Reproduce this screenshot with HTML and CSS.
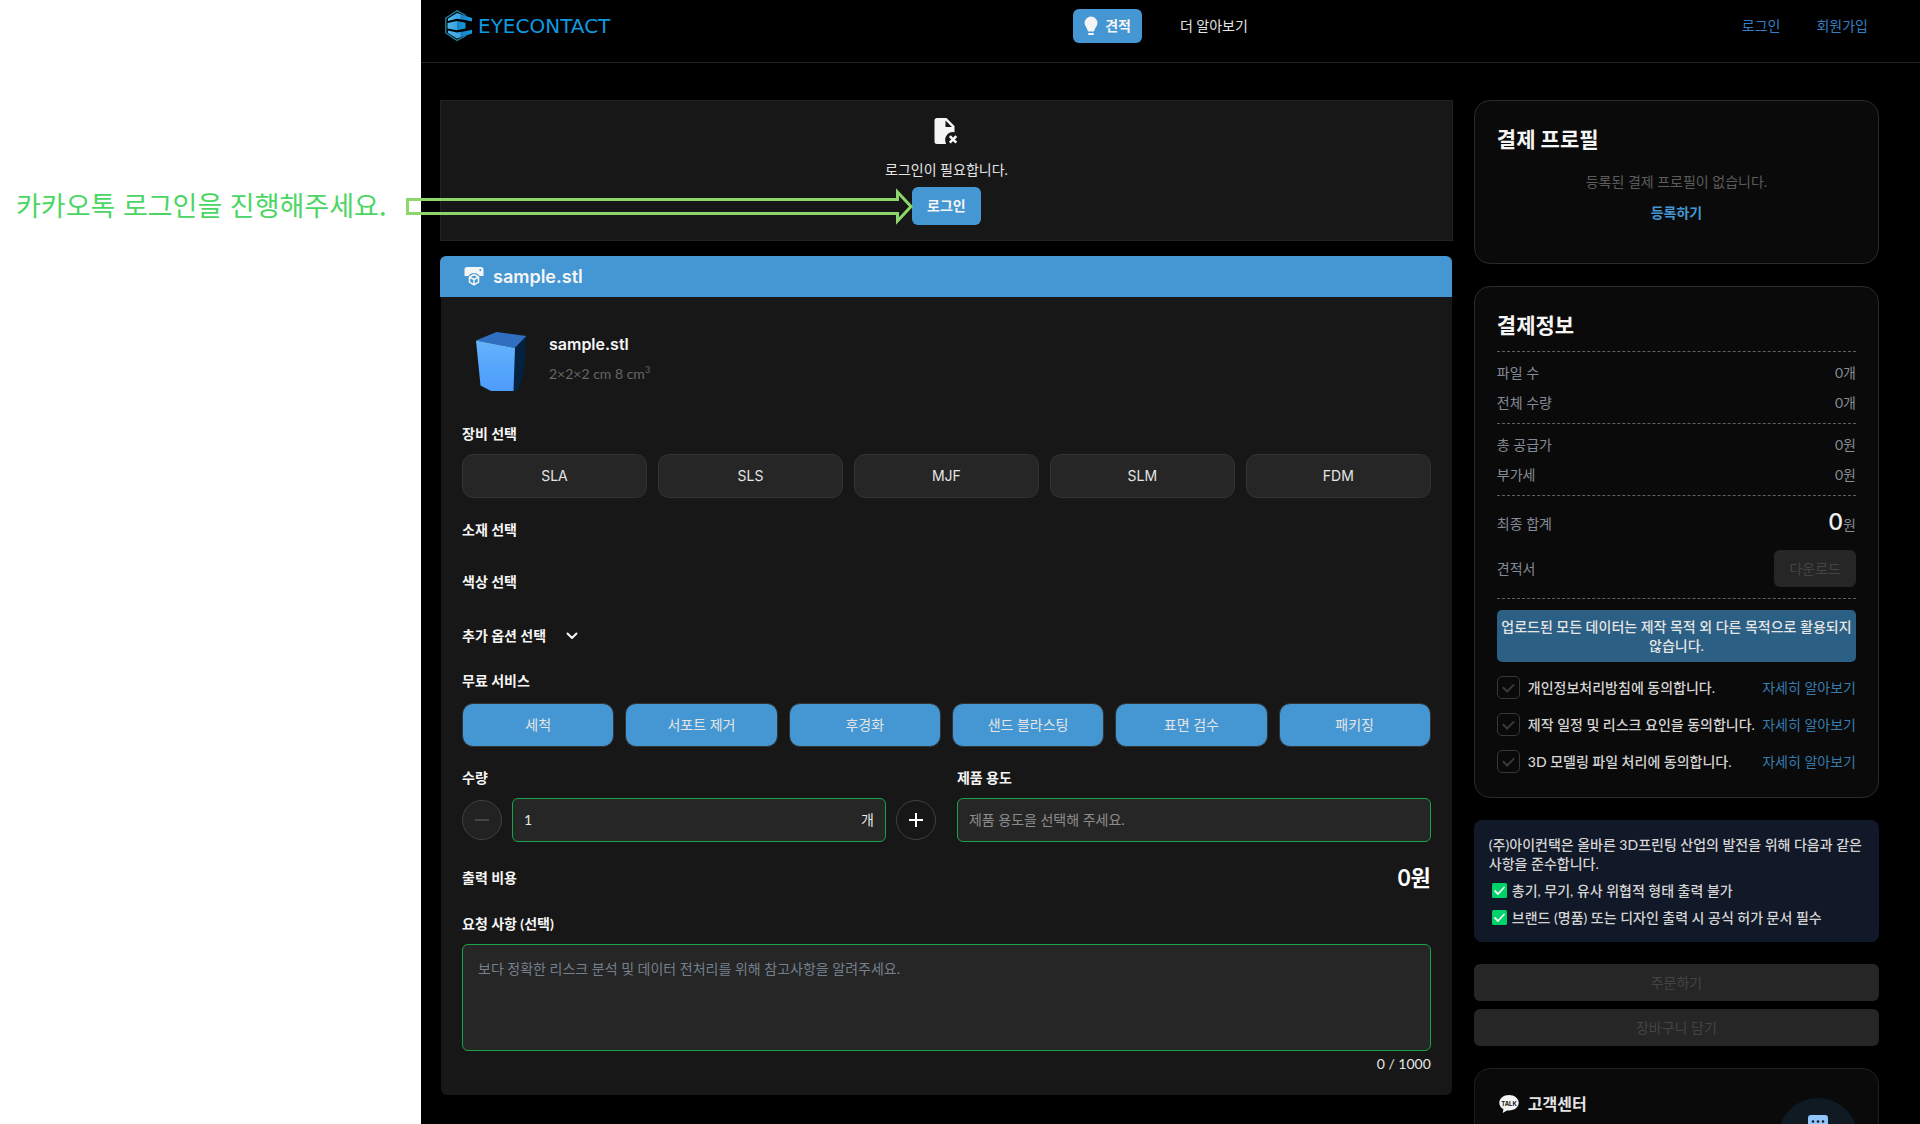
FILE: index.html
```html
<!DOCTYPE html>
<html lang="ko">
<head>
<meta charset="utf-8">
<meta name="viewport" content="width=device-width, initial-scale=1">
<title>EYECONTACT 견적</title>
<link rel="stylesheet" href="styles.css">
</head>
<body>
<div class="page">
  <aside class="guide">
    <p class="guide-text">카카오톡 로그인을 진행해주세요.</p>
    <svg class="guide-arrow" width="510" height="40" viewBox="0 0 510 40" aria-hidden="true">
      <path d="M2.500 12.500H492.500V5L506 19.500L492.500 34V26.500H2.500Z" fill="none" stroke="#8cd66b" stroke-width="3"/>
    </svg>
  </aside>

  <div class="app">
    <header class="header">
      <a class="logo" href="#">
        <svg width="28" height="32" viewBox="0 0 28 32" aria-hidden="true">
          <defs>
            <linearGradient id="mark" x1="0" x2="1">
              <stop offset="0" stop-color="#4fb4ea"/>
              <stop offset=".5" stop-color="#3aa5e2"/>
              <stop offset=".55" stop-color="#1d7fc0"/>
              <stop offset="1" stop-color="#109be0"/>
            </linearGradient>
          </defs>
          <path d="M21 5.500L12 .8L.8 8V23L12 30.500L21 25.500" fill="none" stroke="#1f86a8" stroke-width="1.300"/>
          <path d="M3 8.500L12 3L27 8V11.500L20 10L12 8.800L3 11Z" fill="url(#mark)"/>
          <path d="M2.500 13L12 11L20.500 12.800V18.500L12 20.200L2.500 18.500Z" fill="url(#mark)"/>
          <path d="M3 20.500L12 22.400L20 21.200L27 19.800V23.500L12 28.500L3 23Z" fill="url(#mark)"/>
        </svg>
        <span>EYECONTACT</span>
      </a>
      <nav class="nav">
        <a class="nav-active" href="#">
          <svg width="14" height="20" viewBox="0 0 14 20" fill="#f5f5f5" aria-hidden="true">
            <path d="M7 .5A6.400 6.400 0 0 0 .6 7C.6 10 2.700 11.300 3.300 13.600Q3.600 15.500 4.600 15.500H9.400Q10.400 15.500 10.700 13.600C11.300 11.300 13.400 10 13.400 7A6.400 6.400 0 0 0 7 .5Z"/>
            <rect x="4" y="17" width="6" height="2" rx="1"/>
          </svg>
          <span>견적</span>
        </a>
        <a class="nav-link" href="#">더 알아보기</a>
      </nav>
      <div class="account">
        <a href="#">로그인</a>
        <a href="#">회원가입</a>
      </div>
    </header>

    <main class="content">
      <div class="main-column">
        <section class="login-panel">
          <svg width="24" height="26" viewBox="0 0 24 26" aria-hidden="true">
            <path d="M3 0H12.500L20.500 8V14.200A8 8 0 0 0 12 25.700V26H3A2.500 2.500 0 0 1 .5 23.500V2.500A2.500 2.500 0 0 1 3 0ZM11.500 2.500V9H18Z" fill="#f5f5f5" fill-rule="evenodd"/>
            <path d="M15.800 18.200L22.300 24.700M22.300 18.200L15.800 24.700" stroke="#f5f5f5" stroke-width="2.600"/>
          </svg>
          <p>로그인이 필요합니다.</p>
          <button class="primary-button" type="button">로그인</button>
        </section>

        <section class="file">
          <h2 class="file-tab">
            <svg width="20" height="19" viewBox="0 0 20 19" aria-hidden="true">
              <path d="M3 0H17A2.500 2.500 0 0 1 19.500 2.500V9H15.500A6.500 6.500 0 0 0 4.500 9H.5V2.500A2.500 2.500 0 0 1 3 0Z" fill="#f5f5f5"/>
              <circle cx="16.300" cy="3" r="1" fill="#4497d3"/>
              <path d="M10 7.500L14.500 10V15.200L10 17.800L5.500 15.200V10ZM5.500 10L10 12.500L14.500 10M10 12.500V17.800" fill="#4497d3" stroke="#f5f5f5" stroke-width="1.500" stroke-linejoin="round"/>
            </svg>
            <span>sample.stl</span>
          </h2>
          <form class="file-body">
            <div class="preview">
              <svg width="51" height="59" viewBox="0 0 51 59" aria-hidden="true">
                <defs>
                  <linearGradient id="front" x1="0" y1="0" x2="0" y2="1">
                    <stop offset="0" stop-color="#67b4fc"/>
                    <stop offset=".5" stop-color="#55a6fc"/>
                    <stop offset="1" stop-color="#4e9dfb"/>
                  </linearGradient>
                </defs>
                <path d="M0 8.500L20.500 0L50.500 4L39 16Z" fill="#306fc0"/>
                <path d="M39 16L50.500 4L48 39Q46 50 41 59H37Z" fill="#04213f"/>
                <path d="M0 8.500L39 16L37.500 59H15L4.500 53.500Z" fill="url(#front)"/>
              </svg>
              <div class="preview-info">
                <h3>sample.stl</h3>
                <p>2×2×2 cm 8 cm<sup>3</sup></p>
              </div>
            </div>

            <section class="equipment">
              <h4>장비 선택</h4>
              <div class="options five">
                <button type="button">SLA</button>
                <button type="button">SLS</button>
                <button type="button">MJF</button>
                <button type="button">SLM</button>
                <button type="button">FDM</button>
              </div>
            </section>

            <h4 class="material">소재 선택</h4>
            <h4 class="color">색상 선택</h4>
            <button class="disclosure" type="button">추가 옵션 선택
              <svg width="12" height="8" viewBox="0 0 12 8" fill="none" stroke="#f5f5f5" stroke-width="2" stroke-linecap="round" stroke-linejoin="round" aria-hidden="true"><path d="M1.500 1.500L6 6L10.500 1.500"/></svg>
            </button>

            <section class="services">
              <h4>무료 서비스</h4>
              <div class="options six">
                <button type="button">세척</button>
                <button type="button">서포트 제거</button>
                <button type="button">후경화</button>
                <button type="button">샌드 블라스팅</button>
                <button type="button">표면 검수</button>
                <button type="button">패키징</button>
              </div>
            </section>

            <div class="fields">
              <div class="field">
                <label for="quantity">수량</label>
                <div class="stepper">
                  <button class="round" type="button" aria-label="감소" disabled>
                    <svg width="14" height="14" viewBox="0 0 14 14" stroke="#525252" stroke-width="1.500" aria-hidden="true"><path d="M0 7H14"/></svg>
                  </button>
                  <div class="quantity">
                    <input id="quantity" type="text" value="1">
                    <span>개</span>
                  </div>
                  <button class="round" type="button" aria-label="증가">
                    <svg width="14" height="14" viewBox="0 0 14 14" stroke="#fff" stroke-width="2" aria-hidden="true"><path d="M0 7H14M7 0V14"/></svg>
                  </button>
                </div>
              </div>
              <div class="field">
                <label for="usage">제품 용도</label>
                <select id="usage"><option>제품 용도을 선택해 주세요.</option></select>
              </div>
            </div>

            <div class="cost">
              <h4>출력 비용</h4>
              <strong>0원</strong>
            </div>

            <div class="request">
              <label for="request">요청 사항 (선택)</label>
              <textarea id="request" placeholder="보다 정확한 리스크 분석 및 데이터 전처리를 위해 참고사항을 알려주세요."></textarea>
              <span class="counter">0 / 1000</span>
            </div>
          </form>
        </section>
      </div>

      <aside class="sidebar">
        <section class="card profile">
          <h2>결제 프로필</h2>
          <p>등록된 결제 프로필이 없습니다.</p>
          <a href="#">등록하기</a>
        </section>

        <section class="card payment">
          <h2>결제정보</h2>
          <dl class="rows">
            <div><dt>파일 수</dt><dd>0개</dd></div>
            <div><dt>전체 수량</dt><dd>0개</dd></div>
          </dl>
          <dl class="rows">
            <div><dt>총 공급가</dt><dd>0원</dd></div>
            <div><dt>부가세</dt><dd>0원</dd></div>
          </dl>
          <dl class="rows total">
            <div><dt>최종 합계</dt><dd><b>0</b>원</dd></div>
            <div><dt>견적서</dt><dd><button class="muted-button" type="button" disabled>다운로드</button></dd></div>
          </dl>
          <div class="agreements">
            <p class="data-notice">업로드된 모든 데이터는 제작 목적 외 다른 목적으로 활용되지 않습니다.</p>
            <div class="agreement">
              <input id="agree-privacy" type="checkbox">
              <label for="agree-privacy">개인정보처리방침에 동의합니다.</label>
              <a href="#">자세히 알아보기</a>
            </div>
            <div class="agreement">
              <input id="agree-schedule" type="checkbox">
              <label for="agree-schedule">제작 일정 및 리스크 요인을 동의합니다.</label>
              <a href="#">자세히 알아보기</a>
            </div>
            <div class="agreement">
              <input id="agree-model" type="checkbox">
              <label for="agree-model">3D 모델링 파일 처리에 동의합니다.</label>
              <a href="#">자세히 알아보기</a>
            </div>
          </div>
        </section>

        <section class="policy">
          <p>(주)아이컨택은 올바른 3D프린팅 산업의 발전을 위해 다음과 같은 사항을 준수합니다.</p>
          <ul>
            <li><svg width="15" height="15" viewBox="0 0 15 15" aria-hidden="true"><rect width="15" height="15" rx="1.500" fill="#00d26a"/><path d="M3 8L6 11L12 4.500" fill="none" stroke="#f4f4f4" stroke-width="1.800" stroke-linecap="round" stroke-linejoin="round"/></svg>총기, 무기, 유사 위협적 형태 출력 불가</li>
            <li><svg width="15" height="15" viewBox="0 0 15 15" aria-hidden="true"><rect width="15" height="15" rx="1.500" fill="#00d26a"/><path d="M3 8L6 11L12 4.500" fill="none" stroke="#f4f4f4" stroke-width="1.800" stroke-linecap="round" stroke-linejoin="round"/></svg>브랜드 (명품) 또는 디자인 출력 시 공식 허가 문서 필수</li>
          </ul>
        </section>

        <div class="order-actions">
          <button class="muted-button" type="button" disabled>주문하기</button>
          <button class="muted-button" type="button" disabled>장바구니 담기</button>
        </div>

        <section class="card support">
          <h3>
            <svg width="20" height="18" viewBox="0 0 20 18" aria-hidden="true">
              <path d="M10 0C4.500 0 .3 3.400 .3 7.800C.3 10.600 1.900 12.900 4.400 14.300L3.700 18L8 15.400C15 16.200 19.700 12.500 19.700 7.800C19.700 3.400 15.500 0 10 0Z" fill="#f5f5f5"/>
              <text x="10" y="10.500" text-anchor="middle" class="talk">TALK</text>
            </svg>
            고객센터
          </h3>
        </section>
      </aside>
    </main>
  </div>

  <button class="chat" type="button" aria-label="채팅">
    <svg width="20" height="20" viewBox="0 0 20 20" aria-hidden="true">
      <path d="M3 0H17A3 3 0 0 1 20 3V13A3 3 0 0 1 17 16H9L4 20V16H3A3 3 0 0 1 0 13V3A3 3 0 0 1 3 0Z" fill="#93c5fd"/>
      <g fill="#101a24"><circle cx="5" cy="6.500" r="1.300"/><circle cx="10" cy="6.500" r="1.300"/><circle cx="15" cy="6.500" r="1.300"/></g>
    </svg>
  </button>
</div>
</body>
</html>
```
FILE: styles.css
```css
:root {
  --blue: #4497d3;
  --surface: #171717;
  --raised: #262626;
  --line: #333333;
  --green: #16a34a;
  --text: #e5e5e5;
  --muted: #858b96;
}

*, *::before { box-sizing: border-box; }

body, h2, h3, h4, p, ul, dl, dd { margin: 0; padding: 0; }

body {
  background: #fff;
  color: var(--text);
  font-family: Lato, "Noto Sans CJK KR", sans-serif;
  font-size: 14px;
  line-height: 20px;
}

button, input, select, textarea { font: inherit; color: inherit; }
button { padding: 0; border: 0; background: none; }
a { color: var(--blue); text-decoration: none; }
svg { display: block; flex: none; }

h4, label { font-size: 14px; font-weight: 700; line-height: 20px; color: #f5f5f5; }

.page {
  position: relative;
  display: grid;
  grid-template-columns: 421px 1fr;
  height: 100vh;
  overflow: hidden;
}

/* login hint beside the page */
.guide { padding: 187px 0 0 16px; }
.guide-text {
  color: #4bd663;
  font-family: "Noto Sans CJK KR", sans-serif;
  font-size: 27px;
  line-height: 36px;
  white-space: nowrap;
}
.guide-arrow { position: absolute; left: 405px; top: 187px; z-index: 2; }

.app {
  background: #000;
  overflow-y: auto;
  scrollbar-width: none;
}

/* header */
.header {
  display: grid;
  grid-template-columns: 1fr auto 1fr;
  align-items: start;
  height: 63px;
  padding: 9px 24px 0;
  border-bottom: 1px solid #222;
}
.logo {
  display: flex;
  align-items: center;
  gap: 5px;
  height: 34px;
  color: #0d9ae0;
  font: 20px/34px "DejaVu Sans", sans-serif;
}
.nav { display: flex; gap: 16px; }
.nav a { display: flex; align-items: center; height: 34px; }
.nav-active {
  gap: 7px;
  padding: 0 11px;
  border-radius: 6px;
  background: var(--blue);
  color: #f5f5f5;
  font-weight: 700;
}
.nav-link { padding: 0 20px 0 22px; color: var(--text); }
.account {
  display: flex;
  justify-content: flex-end;
  gap: 36px;
  padding-right: 28px;
  line-height: 34px;
}
.account a { color: #347fc4; }

/* page columns */
.content {
  display: grid;
  grid-template-columns: 5fr 2fr;
  align-items: start;
  gap: 21px;
  padding: 37px 41px 28px 19px;
}
.main-column { display: flex; flex-direction: column; gap: 15px; min-width: 0; }
.sidebar { display: flex; flex-direction: column; gap: 22px; min-width: 0; }

.login-panel {
  display: flex;
  flex-direction: column;
  align-items: center;
  padding: 17px 0 15px;
  border: 1px solid #222;
  background: var(--surface);
}
.login-panel p { margin: 16px 0 7px; }
.primary-button {
  height: 38px;
  padding: 0 15px;
  border-radius: 6px;
  background: var(--blue);
  color: #f5f5f5;
  font-weight: 700;
}

/* uploaded file */
.file-tab {
  display: flex;
  align-items: center;
  gap: 9px;
  height: 41px;
  margin-right: 1px;
  padding: 0 24px;
  border-radius: 6px 6px 0 0;
  background: var(--blue);
  color: #f5f5f5;
  font: 600 18px/24px Inter, sans-serif;
}
.file-body {
  margin: 0 1px;
  padding: 35px 21px 21px;
  border-radius: 0 0 6px 6px;
  background: var(--surface);
}
.preview { display: flex; gap: 22px; padding-left: 14px; }
.preview-info h3 { color: #f5f5f5; font: 600 16px/24px Inter, sans-serif; }
.preview-info p { margin-top: 8px; color: #666; }
.preview-info sup { font-size: 9px; line-height: 0; }

.equipment { margin-top: 33px; }
.material { margin-top: 22px; }
.color { margin-top: 32px; }
.disclosure {
  display: flex;
  align-items: center;
  gap: 20px;
  margin-top: 34px;
  color: #f5f5f5;
  font-weight: 700;
}
.services { margin-top: 25px; }

.options { display: grid; gap: 11px; margin-top: 10px; }
.services .options { margin-top: 12px; }
.options button {
  height: 44px;
  border: 1px solid var(--line);
  border-radius: 11px;
  background: var(--raised);
}
.five { grid-template-columns: repeat(5, 1fr); }
.five button { font-family: Inter, sans-serif; }
.six { grid-template-columns: repeat(6, 1fr); }
.six button { background: var(--blue); }

.fields {
  display: grid;
  grid-template-columns: 1fr 1fr;
  gap: 21px;
  margin-top: 21px;
}
.field { display: flex; flex-direction: column; gap: 10px; min-width: 0; }
.stepper { display: flex; align-items: center; gap: 10px; }
.round {
  display: grid;
  place-items: center;
  flex: none;
  width: 40px;
  height: 40px;
  border: 1px solid #404040;
  border-radius: 50%;
}
.round:disabled { background: #222; }
.quantity, select, textarea {
  border: 1px solid var(--green);
  border-radius: 6px;
  background: var(--raised);
}
.quantity {
  display: flex;
  align-items: center;
  flex: 1;
  min-width: 0;
  height: 44px;
  padding: 0 11px;
}
.quantity input {
  flex: 1;
  min-width: 0;
  padding: 0;
  border: 0;
  outline: 0;
  background: none;
}
select {
  appearance: none;
  width: 100%;
  height: 44px;
  padding: 0 11px;
  color: #8c8c8c;
}

.cost {
  display: flex;
  justify-content: space-between;
  align-items: center;
  height: 20px;
  margin-top: 26px;
}
.cost strong { color: #fff; font-size: 22px; line-height: 28px; }

.request { display: flex; flex-direction: column; margin-top: 26px; }
textarea {
  height: 107px;
  margin: 10px 0 3px;
  padding: 14px 15px;
  resize: none;
}
textarea::placeholder { color: #74808c; opacity: 1; }
.counter { align-self: flex-end; }

/* sidebar cards */
.card {
  padding: 24px 22px;
  border: 1px solid #2a2a2a;
  border-radius: 16px;
  background: #0a0a0a;
}
.card h2 { color: #f5f5f5; font-size: 21px; line-height: 28px; }

.profile {
  display: flex;
  flex-direction: column;
  padding-bottom: 40px;
  text-align: center;
}
.profile h2 { text-align: left; }
.profile p { margin: 19px 0 11px; color: #5c5c5c; }
.profile a { align-self: center; font-weight: 700; }

.payment h2 { margin-bottom: 12px; }
.rows {
  display: flex;
  flex-direction: column;
  gap: 10px;
  padding: 11px 0 10px;
  border-top: 1px dashed #5b616b;
  color: var(--muted);
}
.rows div { display: flex; justify-content: space-between; align-items: center; }
.total { gap: 11px; padding: 12px 0 11px; }
.total dd { line-height: 28px; }
.total b { color: #f0f0f0; font: 500 23px/28px Inter, sans-serif; }

.muted-button {
  height: 37px;
  padding: 0 15px;
  border-radius: 6px;
  background: var(--raised);
  color: #444;
}
.rows .muted-button { display: block; }

.agreements {
  display: flex;
  flex-direction: column;
  gap: 14px;
  padding-top: 11px;
  border-top: 1px dashed #5b616b;
}
.data-notice {
  padding: 7px 4px;
  border-radius: 5px;
  background: #2c5f84;
  font-weight: 500;
  line-height: 19px;
  text-align: center;
}
.agreement { display: flex; align-items: center; height: 23px; white-space: nowrap; }
.agreement input {
  display: grid;
  justify-content: center;
  appearance: none;
  width: 23px;
  height: 23px;
  margin: 0 8px 0 0;
  padding-top: 6px;
  border: 1px solid #383838;
  border-radius: 5px;
}
.agreement input::before {
  content: "";
  width: 11px;
  height: 7px;
  border: solid #3a3a3a;
  border-width: 0 0 2px 2px;
  transform: rotate(-45deg);
}
.agreement label { flex: 1; color: #d4d4d4; font-weight: 500; }
.agreement a { color: #387bad; }

.policy {
  padding: 15px 8px 15px 15px;
  border-radius: 8px;
  background: #111827;
  color: #d4d4d4;
  font-weight: 500;
  line-height: 19px;
}
.policy ul {
  display: flex;
  flex-direction: column;
  gap: 8px;
  margin-top: 8px;
  list-style: none;
}
.policy li { display: flex; align-items: center; gap: 5px; padding-left: 3px; }

.order-actions { display: flex; flex-direction: column; gap: 8px; }

.support { min-height: 180px; border-color: #1f1f1f; }
.support h3 {
  display: flex;
  align-items: center;
  gap: 9px;
  padding-left: 2px;
  color: #e5e5e5;
  font-size: 16px;
  line-height: 22px;
}
.talk { font: 700 6px Inter, sans-serif; fill: #111; }

.chat {
  position: fixed;
  right: 62px;
  bottom: -54px;
  display: flex;
  justify-content: center;
  width: 80px;
  height: 80px;
  padding-top: 17px;
  border-radius: 50%;
  background: #101a22;
}
```
